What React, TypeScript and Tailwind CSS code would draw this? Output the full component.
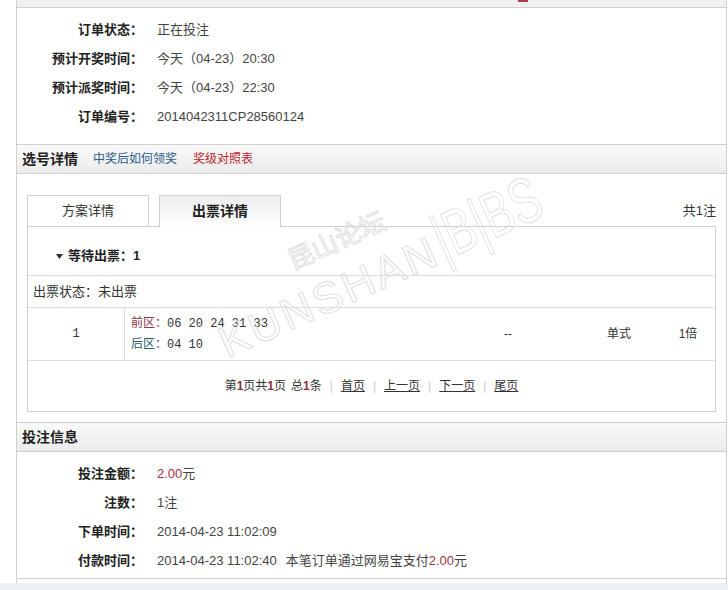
const sans = "font-['Liberation_Sans','Noto_Sans_CJK_SC',sans-serif]";

const orderRows = [
    { label: "订单状态：", value: "正在投注" },
    { label: "预计开奖时间：", value: "今天（04-23）20:30" },
    { label: "预计派奖时间：", value: "今天（04-23）22:30" },
    { label: "订单编号：", value: "2014042311CP28560124" },
];

function InfoRow({ label, children }: { label: string; children: React.ReactNode }) {
    return (
        <div className="flex h-[29px] items-center">
            <div className="w-[126px] text-right text-[13px] font-bold text-[#222]">{label}</div>
            <div className="ml-[14px] text-[13px] text-[#444]">{children}</div>
        </div>
    );
}

function SectionHeader({ children }: { children: React.ReactNode }) {
    return (
        <div className="flex h-[30px] items-center border-y border-[#cfcfcf] bg-gradient-to-b from-[#fafafa] to-[#ebebeb] pl-[5px]">
            {children}
        </div>
    );
}

function Sep() {
    return <span className="mx-[8px] text-[#ccc]">|</span>;
}

function Watermark() {
    const stroke = "text-transparent [-webkit-text-stroke:1px_#dedede]";
    return (
        <div className="pointer-events-none absolute left-[230px] top-[281px] origin-bottom-left -rotate-[24deg] select-none">
            <div className={`ml-[96px] text-[26px] leading-[24px] ${stroke} font-['Noto_Sans_CJK_SC',sans-serif]`}>
                昆山论坛
            </div>
            <div className="flex items-end">
                <span className={`text-[44px] leading-[44px] tracking-[3px] ${stroke} font-['Liberation_Sans',sans-serif]`}>
                    KUNSHAN
                </span>
                <span className={`ml-[2px] inline-block origin-left scale-x-70 text-[64px] leading-[60px] ${stroke} font-['Liberation_Sans',sans-serif]`}>
                    |B|BS
                </span>
            </div>
        </div>
    );
}

export default function App() {
    return (
        <div className={`relative h-[590px] w-[728px] overflow-hidden bg-white ${sans} text-[13px] text-[#333]`}>
            <div className="ml-4 w-[711px] border-x border-[#cfcfcf]">
                {/* top strip */}
                <div className="h-[8px] overflow-hidden border-b border-[#d0d0d0] bg-[#f0f0f0]">
                    <div className="ml-[501px] h-[2px] w-[10px] bg-[#a8404c]" />
                </div>

                {/* order info */}
                <div className="pb-[13px] pt-[7px]">
                    {orderRows.map((r) => (
                        <InfoRow key={r.label} label={r.label}>
                            {r.value}
                        </InfoRow>
                    ))}
                </div>

                <SectionHeader>
                    <span className="text-[14px] font-bold text-[#222]">选号详情</span>
                    <a className="ml-[15px] text-[12px] text-[#2a5c8c]">中奖后如何领奖</a>
                    <a className="ml-[16px] text-[12px] text-[#c0262c]">奖级对照表</a>
                </SectionHeader>

                <div className="px-[10px] pb-[10px] pt-[21px]">
                    {/* tabs */}
                    <div className="flex h-[32px] items-end border-b border-[#cfcfcf]">
                        <div className="flex h-[31px] w-[122px] items-center justify-center border-x border-t border-[#cfcfcf] text-[13px] text-[#333]">
                            方案详情
                        </div>
                        <div className="relative -mb-px ml-[10px] flex h-[32px] w-[122px] items-center justify-center border-x border-t border-[#cfcfcf] bg-gradient-to-b from-[#ededed] to-white text-[14px] font-bold text-[#222]">
                            出票详情
                        </div>
                        <div className="ml-auto self-center text-[13px] text-[#333]">共1注</div>
                    </div>

                    {/* ticket box */}
                    <div className="border-x border-b border-[#cfcfcf]">
                        <div className="flex items-center border-b border-[#dcdcdc] pb-[11px] pl-[28px] pt-[21px] leading-[16px]">
                            <svg width="7" height="5" viewBox="0 0 7 5" className="mr-[5px]">
                                <path d="M0 0h7L3.5 5z" fill="#333" />
                            </svg>
                            <span className="text-[13px] font-bold text-[#222]">等待出票：1</span>
                        </div>
                        <div className="flex h-[32px] items-center border-b border-[#dcdcdc] pl-[5px] text-[13px] text-[#333]">
                            出票状态：未出票
                        </div>
                        <div className="flex h-[53px] items-center border-b border-[#dcdcdc] text-[12px] text-[#333]">
                            <div className="flex h-full w-[97px] items-center justify-center border-r border-[#dcdcdc] font-['Liberation_Mono',monospace]">
                                1
                            </div>
                            <div className="w-[325px] pl-[6px] leading-[20px]">
                                <div>
                                    <span className="text-[#8a3444]">前区：</span>
                                    <span className="font-['Liberation_Mono',monospace]">06 20 24 31 33</span>
                                </div>
                                <div>
                                    <span className="text-[#2d5a68]">后区：</span>
                                    <span className="font-['Liberation_Mono',monospace]">04 10</span>
                                </div>
                            </div>
                            <div className="w-[116px] text-center">--</div>
                            <div className="w-[106px] text-center">单式</div>
                            <div className="w-[32px] text-center">1倍</div>
                        </div>
                        <div className="flex h-[50px] items-center justify-center text-[12px] text-[#333]">
                            <span>
                                第<b className="text-[#8a2a3a]">1</b>页共<b className="text-[#8a2a3a]">1</b>页
                            </span>
                            <span className="ml-[5px]">
                                总<b className="text-[#8a2a3a]">1</b>条
                            </span>
                            <Sep />
                            <a className="underline">首页</a>
                            <Sep />
                            <a className="underline">上一页</a>
                            <Sep />
                            <a className="underline">下一页</a>
                            <Sep />
                            <a className="underline">尾页</a>
                        </div>
                    </div>
                </div>

                <SectionHeader>
                    <span className="text-[14px] font-bold text-[#222]">投注信息</span>
                </SectionHeader>

                <div className="border-b border-[#cfcfcf] pb-[3px] pt-[7px]">
                    <InfoRow label="投注金额：">
                        <span className="text-[#a3323f]">2.00</span>元
                    </InfoRow>
                    <InfoRow label="注数：">1注</InfoRow>
                    <InfoRow label="下单时间：">2014-04-23 11:02:09</InfoRow>
                    <InfoRow label="付款时间：">
                        2014-04-23 11:02:40
                        <span className="ml-[9px]">
                            本笔订单通过网易宝支付<span className="text-[#a3323f]">2.00</span>元
                        </span>
                    </InfoRow>
                </div>
                <div className="h-[4px]" />
            </div>
            <div className="h-[7px] bg-[#edf1f6]" />

            <Watermark />
        </div>
    );
}
